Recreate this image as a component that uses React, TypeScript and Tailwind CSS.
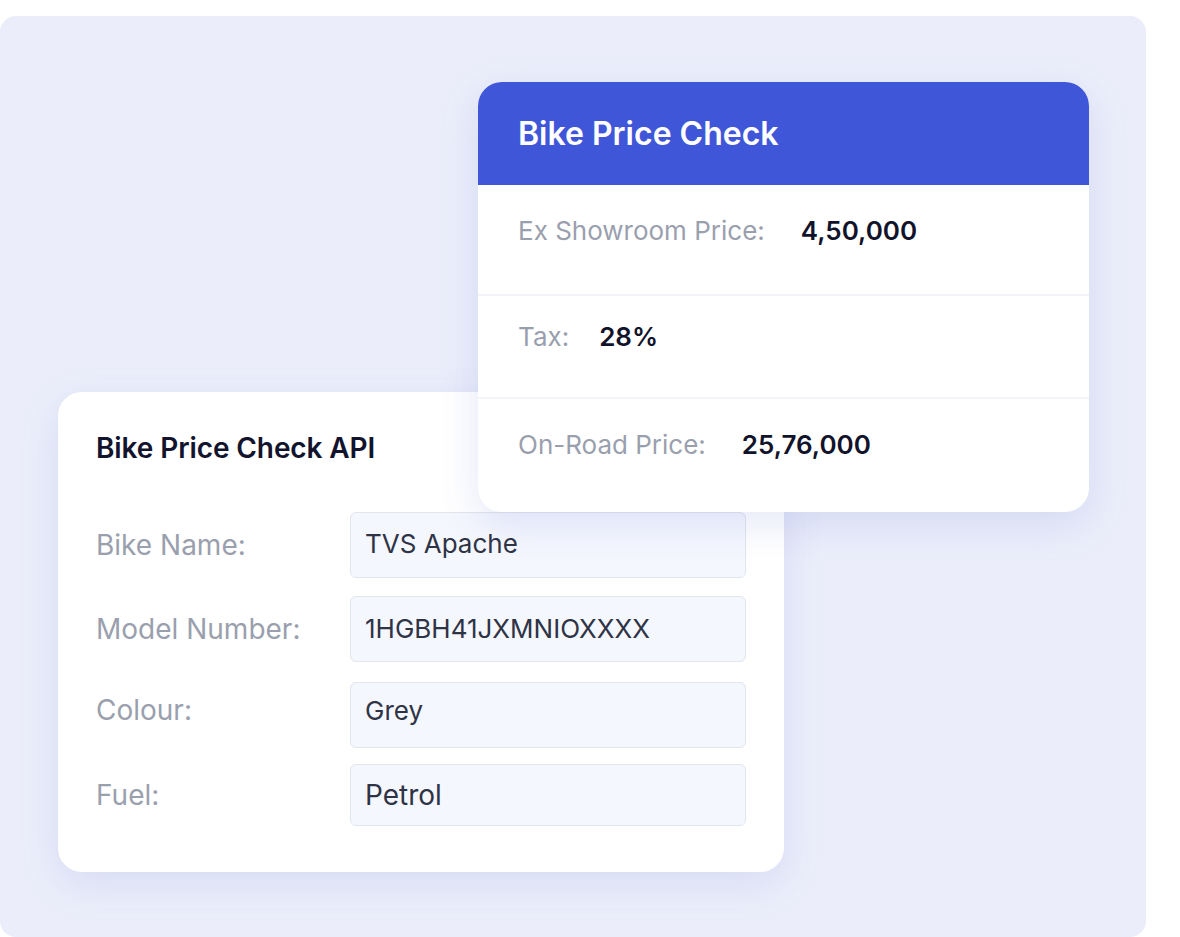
import React from 'react'

// ── Data ──────────────────────────────────────────────────────────────────────
const PRICE_ROWS = [
  { label: 'Ex Showroom Price:', value: '4,50,000', h: 'h-[109px] pt-[31px] gap-[36px]' },
  { label: 'Tax:', value: '28%', h: 'h-[103px] pt-[26px] gap-[30px] border-t-2 border-[#f3f4fa]' },
  { label: 'On-Road Price:', value: '25,76,000', h: 'flex-1 pt-[31px] gap-[36px] border-t-2 border-[#f3f4fa]' }
]

const FIELDS = [
  { label: 'Bike Name:', value: 'TVS Apache', h: 'h-[66px] text-[26px] pb-[3px]', mt: '', lift: '' },
  { label: 'Model Number:', value: '1HGBH41JXMNIOXXXX', h: 'h-[66px] text-[26px] pb-[2px]', mt: 'mt-[18px]', lift: '' },
  { label: 'Colour:', value: 'Grey', h: 'h-[66px] text-[26px] pb-[10px]', mt: 'mt-[20px]', lift: 'pb-[10px]' },
  { label: 'Fuel:', value: 'Petrol', h: 'h-[62px] text-[28px]', mt: 'mt-[16px]', lift: '' }
]

// ── Form Card ─────────────────────────────────────────────────────────────────
function FormCard(): React.ReactElement {
  return (
    <div className="ml-[58px] w-[726px] h-[480px] rounded-[24px] bg-white shadow-[0_12px_40px_rgba(70,90,200,0.12)] pl-[38px] pt-[40px]">
      <h2 className="text-[28px] leading-[32px] font-semibold text-[#12142e] tracking-[-0.1px]">Bike Price Check API</h2>
      <div className="mt-[48px] flex flex-col">
        {FIELDS.map(f => (
          <div key={f.label} className={`flex items-center ${f.mt}`}>
            <span className={`w-[254px] text-[28px] text-[#9a9fae] ${f.lift}`}>{f.label}</span>
            <div className={`w-[396px] ${f.h} rounded-[6px] bg-[#f5f7fe] border border-[#e2e5ee] flex items-center pl-[14px] text-[#2e3345]`}>
              {f.value}
            </div>
          </div>
        ))}
      </div>
    </div>
  )
}

// ── Result Card ───────────────────────────────────────────────────────────────
function ResultCard(): React.ReactElement {
  return (
    <div className="absolute left-[478px] top-[66px] w-[611px] h-[430px] rounded-[24px] bg-white overflow-hidden shadow-[0_12px_40px_rgba(70,90,200,0.14)] flex flex-col">
      <div className="h-[103px] bg-[#3f56d8] flex items-center pl-[40px]">
        <span className="text-[32px] font-semibold text-white">Bike Price Check</span>
      </div>
      {PRICE_ROWS.map(r => (
        <div key={r.label} className={`${r.h} pl-[40px] flex items-start`}>
          <span className="text-[26px] leading-[30px] text-[#9a9fae]">{r.label}</span>
          <span className="text-[26px] leading-[30px] font-semibold text-[#11132b]">{r.value}</span>
        </div>
      ))}
    </div>
  )
}

export default function App(): React.ReactElement {
  return (
    <div className="w-[1180px] h-[937px] bg-white overflow-hidden pt-[16px]" style={{ fontFamily: 'Inter, "Noto Sans", sans-serif' }}>
      <div className="relative w-[1146px] h-[921px] rounded-[16px] bg-[#ebeefa] pt-[376px]">
        <FormCard />
        <ResultCard />
      </div>
    </div>
  )
}
